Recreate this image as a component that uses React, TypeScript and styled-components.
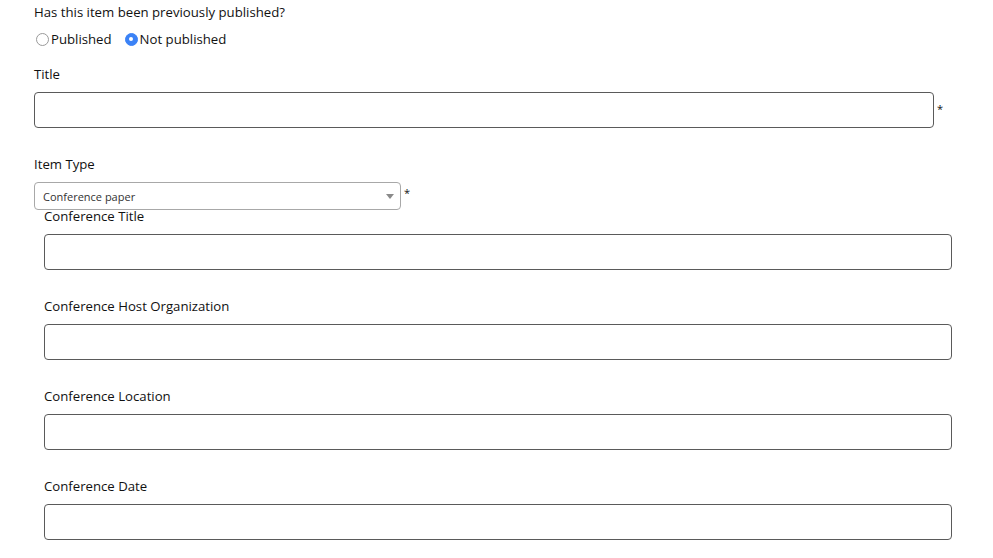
import React from "react";
import styled, { createGlobalStyle } from "styled-components";

const Global = createGlobalStyle`
  html, body { margin: 0; padding: 0; background: #fff; }
  body { font-family: "Open Sans", "Liberation Sans", sans-serif; color: #111; }
  * { box-sizing: border-box; }
`;

const Page = styled.div`
  padding: 3px 0 0 34px;
  width: 993px;
`;

const Question = styled.div`
  font-size: 13.2px;
  line-height: 18px;
  height: 18px;
`;

const RadioRow = styled.div`
  display: flex;
  align-items: center;
  gap: 13px;
  height: 24px;
  margin-top: 6px;
  margin-left: 2px;
`;

const RadioOption = styled.label`
  display: flex;
  align-items: center;
  font-size: 13.2px;
  gap: 2px;
`;

const RadioDot = styled.span<{ $checked?: boolean }>`
  width: 13px;
  height: 13px;
  border-radius: 50%;
  display: inline-flex;
  align-items: center;
  justify-content: center;
  border: 1px solid ${(p) => (p.$checked ? "#3b82f6" : "#9a9a9a")};
  background: ${(p) => (p.$checked ? "#3b82f6" : "#fff")};
  &::after {
    content: "";
    width: 4px;
    height: 4px;
    border-radius: 50%;
    background: ${(p) => (p.$checked ? "#fff" : "transparent")};
  }
`;

const Field = styled.div<{ $indent?: boolean; $gapTop: number }>`
  margin-top: ${(p) => p.$gapTop}px;
  margin-left: ${(p) => (p.$indent ? 10 : 0)}px;
`;

const Label = styled.div`
  font-size: 13.2px;
  line-height: 18px;
  height: 18px;
`;

const InputRow = styled.div<{ $gap: number }>`
  display: flex;
  align-items: flex-start;
  margin-top: ${(p) => p.$gap}px;
`;

const TextInput = styled.input<{ $width: number }>`
  width: ${(p) => p.$width}px;
  height: 36px;
  border: 1px solid #5a5a5a;
  border-radius: 4px;
  background: #fff;
  padding: 0 8px;
  font-size: 13px;
  font-family: inherit;
  outline: none;
`;

const Required = styled.span<{ $top: number }>`
  font-size: 11px;
  margin-left: 3px;
  margin-top: ${(p) => p.$top}px;
  line-height: 11px;
`;

const SelectBox = styled.div`
  position: relative;
  width: 367px;
  height: 28px;
  border: 1px solid #a8a8a8;
  border-radius: 4px;
  display: flex;
  align-items: center;
  padding: 0 8px;
  font-size: 11px;
  color: #333;
`;

const Caret = styled.span`
  position: absolute;
  right: 6px;
  top: 11px;
  width: 0;
  height: 0;
  border-left: 4px solid transparent;
  border-right: 4px solid transparent;
  border-top: 5px solid #8a8a8a;
`;

const conferenceFields = [
  "Conference Title",
  "Conference Host Organization",
  "Conference Location",
  "Conference Date",
];

export default function App() {
  return (
    <>
      <Global />
      <Page>
        <Question>Has this item been previously published?</Question>
        <RadioRow>
          <RadioOption>
            <RadioDot />
            Published
          </RadioOption>
          <RadioOption>
            <RadioDot $checked />
            Not published
          </RadioOption>
        </RadioRow>
        <Field $gapTop={14}>
          <Label>Title</Label>
          <InputRow $gap={9}>
            <TextInput $width={900} />
            <Required $top={11}>*</Required>
          </InputRow>
        </Field>
        <Field $gapTop={27}>
          <Label>Item Type</Label>
          <InputRow $gap={9}>
            <SelectBox>
              Conference paper
              <Caret />
            </SelectBox>
            <Required $top={5}>*</Required>
          </InputRow>
        </Field>
        {conferenceFields.map((f, i) => (
          <Field key={f} $indent $gapTop={i === 0 ? -3 : 27}>
            <Label>{f}</Label>
            <InputRow $gap={9}>
              <TextInput $width={908} />
            </InputRow>
          </Field>
        ))}
      </Page>
    </>
  );
}
